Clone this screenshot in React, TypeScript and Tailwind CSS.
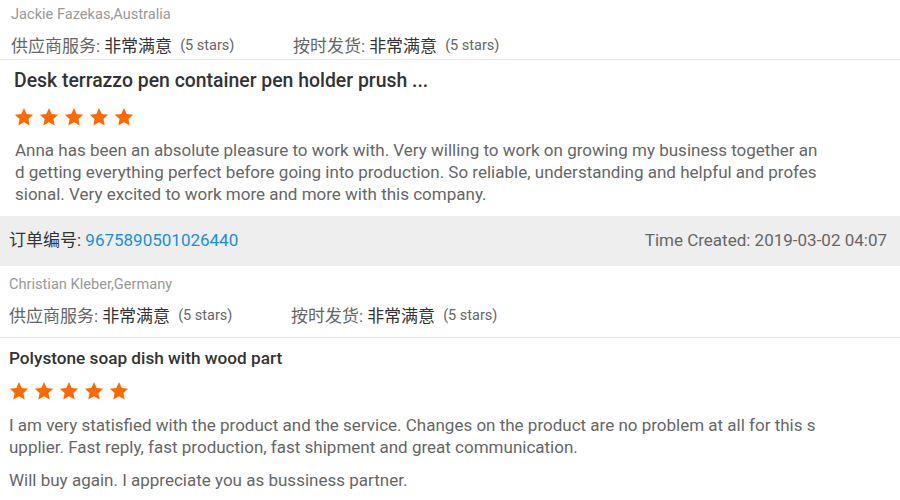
import { ReactNode } from 'react';

const font = { fontFamily: 'Roboto, "Noto Sans CJK SC", sans-serif' };

function Star() {
  return (
    <svg width="20" height="20" viewBox="0 0 24 24" fill="#ff6a00">
      <path d="M12 1.2l3.3 7.1 7.7.9-5.7 5.3 1.5 7.7L12 18.3l-6.8 3.9 1.5-7.7L1 9.2l7.7-.9z" />
    </svg>
  );
}

function Stars({ className }: { className?: string }) {
  return (
    <div className={`flex gap-[5px] ${className ?? ''}`}>
      <Star />
      <Star />
      <Star />
      <Star />
      <Star />
    </div>
  );
}

function Rating({ label, className }: { label: string; className?: string }) {
  return (
    <div className={`flex items-center ${className ?? ''}`}>
      <span className="text-[#666]">{label}: </span>
      <span className="ml-[4px] text-[#333]">非常满意</span>
      <span className="ml-[8px] text-[14.5px] text-[#666]">(5 stars)</span>
    </div>
  );
}

function Paragraph({ children, className }: { children: ReactNode; className?: string }) {
  return (
    <p className={`text-[17px] leading-[22px] text-[#666] break-all ${className ?? ''}`}>{children}</p>
  );
}

export default function App() {
  return (
    <div className="w-[900px] h-[500px] overflow-hidden bg-white" style={font}>
      {/* first review */}
      <div className="pl-[11px] h-[28px] leading-[28px] text-[14.6px] text-[#999]">Jackie Fazekas,Australia</div>
      <div className="flex items-start pl-[11px] h-[32px] pt-[7px] text-[17px] leading-[22px] border-b border-[#e6e6e6]">
        <Rating label="供应商服务" className="w-[282px]" />
        <Rating label="按时发货" />
      </div>
      <div className="pl-[14px] pt-[2px] h-[40px] leading-[38px] text-[19.4px] font-medium text-[#333]">
        Desk terrazzo pen container pen holder prush ...
      </div>
      <Stars className="pl-[14px] mt-[7px]" />
      <div className="pl-[15px] pr-[77px] pt-[12px] pb-[11px]">
        <Paragraph>
          Anna has been an absolute pleasure to work with. Very willing to work on growing my business together and getting everything perfect before going into production. So reliable, understanding and helpful and professional. Very excited to work more and more with this company.
        </Paragraph>
      </div>
      <div className="flex items-center justify-between h-[50px] bg-[#eeeeee] pl-[9px] pr-[13px] text-[17px]">
        <div>
          <span className="text-[#333]">订单编号: </span>
          <span className="text-[#1a8ee0]">9675890501026440</span>
        </div>
        <div className="text-[#666]">Time Created: 2019-03-02 04:07</div>
      </div>

      {/* second review */}
      <div className="pl-[9px] pt-[8px] h-[28px] leading-[20px] text-[14.6px] text-[#999]">Christian Kleber,Germany</div>
      <div className="flex items-start pl-[9px] h-[44px] pt-[11px] text-[17px] leading-[22px] border-b border-[#e6e6e6]">
        <Rating label="供应商服务" className="w-[282px]" />
        <Rating label="按时发货" />
      </div>
      <div className="pl-[9px] h-[40px] leading-[40px] text-[17.2px] font-medium text-[#333]">
        Polystone soap dish with wood part
      </div>
      <Stars className="pl-[9px] mt-[3px]" />
      <div className="pl-[9px] pr-[77px] pt-[13px]">
        <Paragraph className="mb-[11px]">
          I am very statisfied with the product and the service. Changes on the product are no problem at all for this supplier. Fast reply, fast production, fast shipment and great communication.
        </Paragraph>
        <Paragraph>Will buy again. I appreciate you as bussiness partner.</Paragraph>
      </div>
    </div>
  );
}
